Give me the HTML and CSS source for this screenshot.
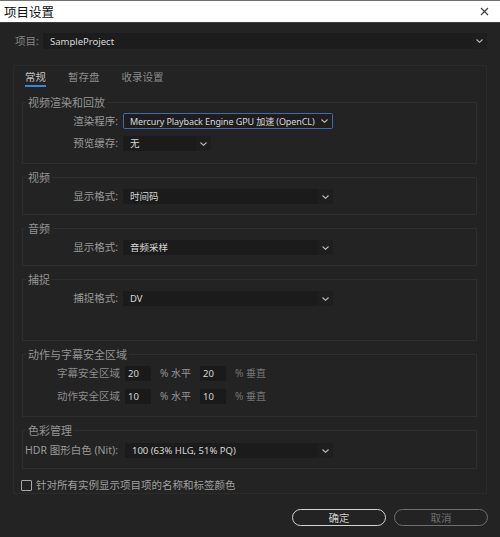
FILE: index.html
```html
<!DOCTYPE html>
<html lang="zh-CN">
<head>
<meta charset="utf-8">
<title>项目设置</title>
<link rel="stylesheet" href="styles.css">
</head>
<body>
<div class="window">
  <header class="titlebar">
    <span class="title">项目设置</span>
    <svg class="close" width="9" height="9" viewBox="0 0 9 9"><path d="M1 1 L8 8 M8 1 L1 8" stroke="#3a3a3a" stroke-width="1.1" fill="none"/></svg>
  </header>
  <div class="content">
    <div class="project-row">
      <span class="plabel">项目:</span>
      <div class="select project">
        <span class="val">SampleProject</span>
        <span class="chev"><svg width="7" height="4" viewBox="0 0 7 4"><path d="M0.5 0.5 L3.5 3.3 L6.5 0.5" fill="none" stroke="#bdbdbd" stroke-width="1.1"/></svg></span>
      </div>
    </div>

    <section class="panel">
      <nav class="tabs">
        <span class="tab active">常规</span>
        <span class="tab">暂存盘</span>
        <span class="tab">收录设置</span>
      </nav>

      <div class="groups">
        <fieldset class="group g-render">
          <legend>视频渲染和回放</legend>
          <div class="row">
            <span class="lbl">渲染程序:</span>
            <div class="select focus w210">
              <span class="val tight">Mercury Playback Engine GPU 加速 (OpenCL)</span>
              <span class="chev"><svg width="7" height="4" viewBox="0 0 7 4"><path d="M0.5 0.5 L3.5 3.3 L6.5 0.5" fill="none" stroke="#bdbdbd" stroke-width="1.1"/></svg></span>
            </div>
          </div>
          <div class="row">
            <span class="lbl">预览缓存:</span>
            <div class="select w88">
              <span class="val">无</span>
              <span class="chev"><svg width="7" height="4" viewBox="0 0 7 4"><path d="M0.5 0.5 L3.5 3.3 L6.5 0.5" fill="none" stroke="#bdbdbd" stroke-width="1.1"/></svg></span>
            </div>
          </div>
        </fieldset>

        <fieldset class="group">
          <legend>视频</legend>
          <div class="row">
            <span class="lbl">显示格式:</span>
            <div class="select w210">
              <span class="val">时间码</span>
              <span class="chev"><svg width="7" height="4" viewBox="0 0 7 4"><path d="M0.5 0.5 L3.5 3.3 L6.5 0.5" fill="none" stroke="#bdbdbd" stroke-width="1.1"/></svg></span>
            </div>
          </div>
        </fieldset>

        <fieldset class="group">
          <legend>音频</legend>
          <div class="row">
            <span class="lbl">显示格式:</span>
            <div class="select w210">
              <span class="val">音频采样</span>
              <span class="chev"><svg width="7" height="4" viewBox="0 0 7 4"><path d="M0.5 0.5 L3.5 3.3 L6.5 0.5" fill="none" stroke="#bdbdbd" stroke-width="1.1"/></svg></span>
            </div>
          </div>
        </fieldset>

        <fieldset class="group g-capture">
          <legend>捕捉</legend>
          <div class="row">
            <span class="lbl">捕捉格式:</span>
            <div class="select w210">
              <span class="val">DV</span>
              <span class="chev"><svg width="7" height="4" viewBox="0 0 7 4"><path d="M0.5 0.5 L3.5 3.3 L6.5 0.5" fill="none" stroke="#bdbdbd" stroke-width="1.1"/></svg></span>
            </div>
          </div>
        </fieldset>

        <fieldset class="group g-safe">
          <legend>动作与字幕安全区域</legend>
          <div class="safe-row">
            <span class="slbl">字幕安全区域</span>
            <span class="num">20</span>
            <span class="unit">% 水平</span>
            <span class="num">20</span>
            <span class="unit dim">% 垂直</span>
          </div>
          <div class="safe-row">
            <span class="slbl">动作安全区域</span>
            <span class="num">10</span>
            <span class="unit">% 水平</span>
            <span class="num">10</span>
            <span class="unit dim">% 垂直</span>
          </div>
        </fieldset>

        <fieldset class="group g-color">
          <legend>色彩管理</legend>
          <div class="row">
            <span class="lbl">HDR 图形白色 (Nit):</span>
            <div class="select w208 shift">
              <span class="val">100 (63% HLG, 51% PQ)</span>
              <span class="chev"><svg width="7" height="4" viewBox="0 0 7 4"><path d="M0.5 0.5 L3.5 3.3 L6.5 0.5" fill="none" stroke="#bdbdbd" stroke-width="1.1"/></svg></span>
            </div>
          </div>
        </fieldset>
      </div>

      <label class="check">
        <span class="box"></span>
        <span class="ctext">针对所有实例显示项目项的名称和标签颜色</span>
      </label>
    </section>

    <footer class="buttons">
      <button class="btn ok">确定</button>
      <button class="btn cancel">取消</button>
    </footer>
  </div>
</div>
</body>
</html>
```

FILE: styles.css
```css
* { box-sizing: border-box; }

html, body {
  margin: 0;
  padding: 0;
}

body {
  width: 500px;
  height: 537px;
  overflow: hidden;
  background: #232323;
  font-family: "Noto Sans", "Noto Sans CJK SC", sans-serif;
  color: #a6a6a6;
}

.window {
  height: 537px;
  display: flex;
  flex-direction: column;
}

.titlebar {
  height: 23px;
  flex: none;
  background: #ffffff;
  border-top: 1px solid #707070;
  border-bottom: 1px solid #3a3a3a;
  display: flex;
  align-items: center;
  justify-content: space-between;
  padding: 0 11px 0 4px;
}

.title {
  font-family: "Noto Sans CJK SC", sans-serif;
  font-size: 12.5px;
  color: #111;
  line-height: 16px;
}

.close { display: block; }

.content {
  flex: 1;
  display: flex;
  flex-direction: column;
  padding: 10px 13px 0 13px;
}

.project-row {
  display: flex;
  align-items: center;
  padding-left: 2px;
}

.plabel {
  font-size: 10.5px;
  color: #858585;
  width: 28px;
  line-height: 15px;
}

.select {
  display: flex;
  align-items: center;
  height: 15px;
  background: #1b1b1b;
  color: #d8d8d8;
  font-size: 9.5px;
  padding-left: 7px;
}

.select .val {
  flex: 1;
  white-space: nowrap;
  overflow: hidden;
  line-height: 15px;
}

.select .val.tight {
  font-size: 9px;
  letter-spacing: -0.1px;
}

.select .chev {
  width: 15px;
  align-self: stretch;
  display: flex;
  align-items: center;
  justify-content: center;
  background: #1e1e1e;
}

.select .chev svg { display: block; }

.select.project {
  flex: 1;
  height: 16px;
  background: #1c1c1c;
}

.select.focus {
  height: 16px;
  border: 1px solid #3c6cae;
  border-radius: 2px;
  padding-left: 6px;
  background: #1d1d1d;
}

.w210 { width: 210px; }
.w208 { width: 208px; }
.w88 { width: 88px; }
.shift { margin-left: 2px; }

.panel {
  margin-top: 16px;
  height: 429px;
  border: 1px solid #2b2b2b;
  padding: 0 9px 0 8px;
  display: flex;
  flex-direction: column;
}

.tabs {
  display: flex;
  gap: 22px;
  padding: 3px 0 0 3px;
}

.tab {
  font-family: "Noto Sans CJK SC", sans-serif;
  font-size: 10.5px;
  line-height: 15px;
  color: #8a8a8a;
  padding-bottom: 1px;
  border-bottom: 2px solid transparent;
}

.tab.active {
  color: #c4c4c4;
  border-bottom-color: #3a86dc;
}

.groups {
  margin-top: 9px;
  display: flex;
  flex-direction: column;
  gap: 7px;
}

.group {
  margin: 0;
  min-width: 0;
  border: 1px solid #2f2f2f;
  padding: 6px 0 10px 0;
}

.group legend {
  font-family: "Noto Sans CJK SC", sans-serif;
  font-size: 11px;
  line-height: 12px;
  color: #939393;
  padding: 0 2px;
  margin-left: 3px;
}

.g-render { padding-top: 5px; padding-bottom: 12px; }
.g-render .row + .row { margin-top: 7px; }
.g-video { padding-bottom: 9px; }
.g-capture { padding-bottom: 34px; }
.g-safe { padding-bottom: 12px; }
.g-color { padding-top: 7px; }

.row {
  display: grid;
  grid-template-columns: 95px auto;
  column-gap: 5px;
  align-items: center;
  justify-content: start;
}

.lbl {
  text-align: right;
  font-size: 10.5px;
  line-height: 15px;
  color: #999;
  white-space: nowrap;
}

.safe-row {
  display: flex;
  align-items: center;
}

.safe-row + .safe-row { margin-top: 8px; }

.slbl {
  width: 97px;
  margin-right: 5px;
  text-align: right;
  font-size: 10.5px;
  line-height: 15px;
  color: #8c8c8c;
}

.num {
  width: 26px;
  height: 15px;
  background: #1a1a1a;
  color: #d6d6d6;
  font-size: 9.5px;
  line-height: 15px;
  padding-left: 3px;
}

.unit {
  width: 49px;
  padding-left: 9px;
  font-size: 10px;
  line-height: 15px;
  color: #959595;
  white-space: nowrap;
}

.unit.dim { color: #757575; }

.check {
  margin-top: 9px;
  display: flex;
  align-items: center;
  gap: 4px;
  margin-left: -1px;
}

.check .box {
  width: 11px;
  height: 11px;
  border: 1.5px solid #a8a8a8;
  border-radius: 1px;
}

.ctext {
  font-size: 10.5px;
  line-height: 14px;
  color: #a0a0a0;
}

.buttons {
  margin-top: 15px;
  display: flex;
  justify-content: flex-end;
  gap: 8px;
  margin-right: -1px;
}

.btn {
  width: 94px;
  height: 17px;
  border-radius: 9px;
  background: transparent;
  font-family: "Noto Sans CJK SC", sans-serif;
  font-size: 10.5px;
  line-height: 13px;
  padding: 0;
}

.btn.ok {
  border: 1.5px solid #d4d4d4;
  color: #c9c9c9;
}

.btn.cancel {
  border: 1.5px solid #6e6e6e;
  color: #6e6e6e;
}
```
